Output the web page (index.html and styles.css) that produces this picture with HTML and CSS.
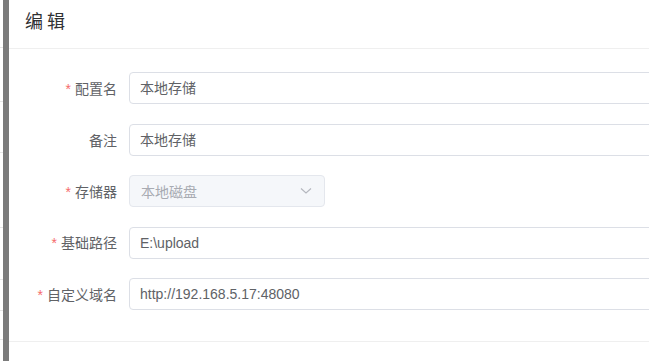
FILE: index.html
```html
<!DOCTYPE html>
<html lang="zh-CN">
<head>
<meta charset="utf-8">
<title>编辑</title>
<link rel="stylesheet" href="styles.css">
</head>
<body>
<div class="screen">
  <div class="page-edge">
    <div class="edge-row r1"></div>
    <div class="edge-row r2"></div>
    <div class="edge-row r3"></div>
    <div class="edge-row r4"></div>
    <div class="edge-row r5"></div>
    <div class="edge-row r6"></div>
    <div class="edge-row r7"></div>
  </div>
  <div class="mask-band"></div>
  <div class="dialog">
    <div class="dialog-header">
      <span class="dialog-title">编 辑</span>
    </div>
    <div class="dialog-body">
      <div class="form-item">
        <label class="form-label"><span class="req">*</span>配置名</label>
        <div class="form-control">
          <div class="input"><span class="input-text">本地存储</span></div>
        </div>
      </div>
      <div class="form-item">
        <label class="form-label">备注</label>
        <div class="form-control">
          <div class="input"><span class="input-text">本地存储</span></div>
        </div>
      </div>
      <div class="form-item">
        <label class="form-label"><span class="req">*</span>存储器</label>
        <div class="form-control">
          <div class="select is-disabled">
            <span class="select-text">本地磁盘</span>
            <svg class="chevron" width="12" height="8" viewBox="0 0 12 8"><polyline points="1,1.5 6,6 11,1.5" fill="none" stroke="#b4b7be" stroke-width="1.1"/></svg>
          </div>
        </div>
      </div>
      <div class="form-item">
        <label class="form-label"><span class="req">*</span>基础路径</label>
        <div class="form-control">
          <div class="input"><span class="input-text">E:\upload</span></div>
        </div>
      </div>
      <div class="form-item">
        <label class="form-label"><span class="req">*</span>自定义域名</label>
        <div class="form-control">
          <div class="input"><span class="input-text">http://192.168.5.17:48080</span></div>
        </div>
      </div>
    </div>
    <div class="dialog-footer"></div>
  </div>
</div>
</body>
</html>
```
FILE: styles.css
```css
html, body {
  margin: 0;
  padding: 0;
  background: #ffffff;
  overflow: hidden;
}

.screen {
  display: flex;
  width: 649px;
  height: 361px;
  overflow: hidden;
  font-family: "Liberation Sans", "Noto Sans CJK SC", sans-serif;
}

.page-edge {
  width: 3px;
  flex: none;
  display: flex;
  flex-direction: column;
  background: #ffffff;
}

.edge-row {
  border-bottom: 1px solid #e6e6e6;
}
.r1 { height: 47px; }
.r2 { height: 53px; }
.r3 { height: 50px; }
.r4 { height: 74px; }
.r5 { height: 51px; }
.r6 { height: 30px; }
.r7 { height: 28px; }

.mask-band {
  width: 6px;
  flex: none;
  background: #7b7b7b;
}

.dialog {
  flex: 1;
  min-width: 0;
  overflow: hidden;
  background: #ffffff;
  display: flex;
  flex-direction: column;
}

.dialog-header {
  padding: 8px 16px 16px 16px;
  border-bottom: 1px solid #efefef;
}

.dialog-title {
  font-size: 18px;
  line-height: 24px;
  color: #303133;
  font-family: "Noto Sans CJK SC", "Liberation Sans", sans-serif;
}

.dialog-body {
  padding: 23px 0 31px 0;
  display: flex;
  flex-direction: column;
  gap: 19.5px;
  border-bottom: 1px solid #efefef;
  overflow: hidden;
}

.form-item {
  display: flex;
  align-items: center;
  height: 32px;
}

.form-label {
  width: 120px;
  flex: none;
  box-sizing: border-box;
  padding-right: 12px;
  text-align: right;
  font-size: 14px;
  line-height: 32px;
  color: #606266;
  font-family: "Noto Sans CJK SC", "Liberation Sans", sans-serif;
}

.req {
  color: #f56c6c;
  margin-right: 4px;
  font-family: "Liberation Sans", sans-serif;
}

.form-control {
  flex: none;
}

.input {
  width: 560px;
  height: 32px;
  box-sizing: border-box;
  border: 1px solid #dcdfe6;
  border-radius: 4px;
  padding: 0 11px 0 10px;
  display: flex;
  align-items: center;
  font-size: 14px;
  color: #606266;
}

.input-text {
  line-height: 30px;
  white-space: nowrap;
}

.select {
  width: 196px;
  height: 32px;
  box-sizing: border-box;
  border: 1px solid #e4e7ed;
  border-radius: 4px;
  background: #f5f7fa;
  padding: 0 12px 0 11px;
  display: flex;
  align-items: center;
  justify-content: space-between;
  font-size: 14px;
  color: #a8abb2;
  font-family: "Noto Sans CJK SC", "Liberation Sans", sans-serif;
}

.chevron {
  display: block;
}

.dialog-footer {
  flex: 1;
}
```
